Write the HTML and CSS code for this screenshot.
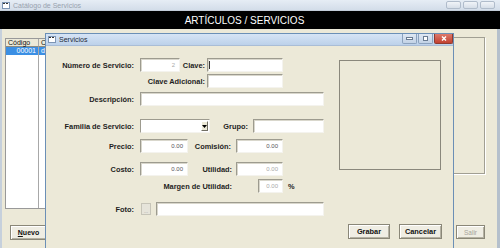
FILE: index.html
```html
<!DOCTYPE html>
<html lang="es">
<head>
<meta charset="utf-8">
<title>Catálogo de Servicios</title>
<link rel="stylesheet" href="styles.css">
</head>
<body>
<div class="win">
  <div class="win-title">
    <svg class="ico" width="8" height="7" viewBox="0 0 8 7"><rect x="0.5" y="0.5" width="7" height="6" fill="#fff" stroke="#7d95b4"/><rect x="1" y="1" width="2" height="1" fill="#333"/><rect x="4" y="1" width="2" height="1" fill="#333"/></svg>
    <span class="win-title-text">Catálogo de Servicios</span>
    <div class="win-btns"><span class="wb"></span><span class="wb"></span><span class="wb"></span></div>
  </div>
  <div class="banner">ARTÍCULOS / SERVICIOS</div>
  <div class="win-body">
    <div class="left-col">
      <div class="list">
        <div class="list-head"><span class="c1 hd">Código</span><span class="c2 hd">C</span></div>
        <div class="list-row sel"><span class="c1 num">00001</span><span class="c2">d</span></div>
        <div class="list-fill"><span class="c1"></span><span class="c2"></span></div>
      </div>
      <button class="btn nuevo"><u>N</u>uevo</button>
    </div>
    <div class="right-col">
      <div class="frame"></div>
      <button class="btn salir">Salir</button>
    </div>
  </div>

  <div class="dlg">
    <div class="dlg-title">
      <svg class="ico" width="8" height="7" viewBox="0 0 8 7"><rect x="0.5" y="0.5" width="7" height="6" fill="#fff" stroke="#7d95b4"/><rect x="1" y="1" width="2" height="1" fill="#333"/><rect x="4" y="1" width="2" height="1" fill="#333"/></svg>
      <span class="dlg-title-text">Servicios</span>
      <div class="dlg-btns">
        <span class="db"><svg width="7" height="3" viewBox="0 0 7 3"><rect x="0.5" y="0.5" width="6" height="2" fill="#fff" stroke="#6a7c92"/></svg></span>
        <span class="db"><svg width="5" height="5" viewBox="0 0 5 5"><rect x="0.5" y="0.5" width="4" height="4" fill="#fff" stroke="#6a7c92"/></svg></span>
        <span class="db close"><svg width="6" height="5" viewBox="0 0 6 5"><path d="M1 0.5 L5 4.5 M5 0.5 L1 4.5" stroke="#fff" stroke-width="1.4"/></svg></span>
      </div>
    </div>
    <div class="dlg-body">
      <div class="form">
        <div class="row r1">
          <span class="lbl w88">Número de Servicio:</span>
          <span class="inp dis ml6 w40">2</span>
          <span class="lbl w25">Clave:</span>
          <span class="inp ml2 w76"><span class="caret"></span></span>
        </div>
        <div class="row r2">
          <span class="lbl w159">Clave Adicional:</span>
          <span class="inp ml2 w76"></span>
        </div>
        <div class="row r3">
          <span class="lbl w88">Descripción:</span>
          <span class="inp ml6 w184"></span>
        </div>
        <div class="row r4">
          <span class="lbl w88">Familia de Servicio:</span>
          <span class="combo ml6"><span class="drop"><svg width="5" height="3" viewBox="0 0 5 3"><path d="M0 0 H5 L2.5 3 Z" fill="#000"/></svg></span></span>
          <span class="lbl w38">Grupo:</span>
          <span class="inp ml5 w71"></span>
        </div>
        <div class="row r5">
          <span class="lbl w88">Precio:</span>
          <span class="inp ml6 w48">0.00</span>
          <span class="lbl w43">Comisión:</span>
          <span class="inp ml5 w47">0.00</span>
        </div>
        <div class="row r6">
          <span class="lbl w88">Costo:</span>
          <span class="inp ml6 w48">0.00</span>
          <span class="lbl w44">Utilidad:</span>
          <span class="inp dis ml4 w47">0.00</span>
        </div>
        <div class="row r7">
          <span class="lbl w186">Margen de Utilidad:</span>
          <span class="inp dis ml26 w25">0.00</span>
          <span class="lbl pct">%</span>
        </div>
        <div class="row r8">
          <span class="lbl w88">Foto:</span>
          <span class="mini">...</span>
          <span class="inp ml5 w168"></span>
        </div>
      </div>
      <div class="side">
        <div class="photo"></div>
        <div class="actions">
          <button class="btn act grabar">Grabar</button>
          <button class="btn act cancelar">Cancelar</button>
        </div>
      </div>
    </div>
  </div>
</div>
</body>
</html>
```
FILE: styles.css
```css
* { box-sizing: border-box; margin: 0; padding: 0; }
html, body { width: 500px; height: 248px; overflow: hidden; }
body { font-family: "Liberation Sans", Arial, sans-serif; background: #ece9d8; color: #1a1a1a; }

.win { position: relative; width: 500px; height: 248px; display: flex; flex-direction: column; background: #ece9d8; overflow: hidden; }

.win-title { height: 11px; display: flex; align-items: center; padding-left: 2px; background: linear-gradient(#e6edf5, #d3dde9); border-bottom: 1px solid #c3ccd8; }
.ico { display: block; flex: none; }
.win-title-text { font-size: 7px; color: #98a2ae; margin-left: 3px; }
.win-btns { margin-left: auto; margin-right: 5px; display: flex; gap: 2px; align-self: flex-start; margin-top: 1px; }
.wb { width: 15px; height: 8px; border: 1px solid #b0bccb; border-radius: 2px; background: linear-gradient(#f1f4f8, #d6dee8); }

.banner { height: 18px; background: #000; color: #fff; font-size: 10px; display: flex; align-items: center; justify-content: center; padding-right: 11px; }

.win-body { flex: 1; display: flex; justify-content: space-between; border-left: 2px solid #c6d0dc; border-right: 3px solid #b5c0cc; padding: 0 12px 0 3px; }

.left-col { display: flex; flex-direction: column; }
.list { margin-top: 9px; width: 200px; height: 171px; background: #fff; border: 1px solid #999; display: flex; flex-direction: column; font-size: 7px; }
.list-head, .list-row, .list-fill { display: flex; }
.list-head { height: 8px; }
.hd { background: #ece9d8; border-right: 1px solid #8c8a7e; border-bottom: 1px solid #8c8a7e; line-height: 7px; padding-left: 2px; color: #111; }
.c1 { width: 33px; border-right: 1px solid #a8a8a8; }
.c2 { flex: 1; padding-left: 2px; }
.list-row { height: 8px; line-height: 8px; }
.sel { background: #3b8fe4; color: #fff; }
.num { text-align: right; padding-right: 2px; }
.list-fill { flex: 1; }

.btn { font-family: "Liberation Sans", Arial, sans-serif; background: #efede3; border: 1px solid #8a8778; box-shadow: inset 1px 1px 0 #fff, inset -1px -1px 0 #b4b1a2; color: #111; display: flex; align-items: center; justify-content: center; }
.nuevo { margin-top: 16px; margin-left: 5px; width: 37px; height: 15px; font-size: 7px; font-weight: bold; }

.right-col { display: flex; flex-direction: column; align-items: flex-end; }
.frame { margin-top: 8px; width: 65px; height: 137px; border: 1px solid #a19f93; box-shadow: 1px 1px 0 #fff; }
.salir { margin-top: 51px; width: 29px; height: 14px; font-size: 6.5px; color: #a6a49a; }

.dlg { position: absolute; left: 45px; top: 33px; width: 409px; height: 215px; background: #ece9d8; border: 1px solid #6b8fb6; border-bottom: none; display: flex; flex-direction: column; }
.dlg-title { height: 12px; flex: none; display: flex; align-items: center; padding-left: 2px; background: linear-gradient(#d6e4f5, #bcd1ea); border-bottom: 1px solid #a9bdd6; }
.dlg-title-text { font-size: 7px; color: #1d2838; margin-left: 3px; }
.dlg-btns { margin-left: auto; display: flex; gap: 1px; align-self: flex-start; }
.db { width: 15px; height: 10px; border: 1px solid #8ca2bd; border-top: none; border-radius: 0 0 2px 2px; background: linear-gradient(#dfe8f3, #c2d2e6); display: flex; align-items: center; justify-content: center; }
.db.close { width: 19px; background: linear-gradient(#de7a6c, #c2402f); border-color: #8e3a30; }

.dlg-body { flex: 1; display: flex; min-height: 0; }
.form { width: 280px; flex: none; padding-top: 1px; }
.row { display: flex; align-items: center; height: 14px; }
.r1 { margin-top: 11px; }
.r2 { margin-top: 2px; }
.r3 { margin-top: 4px; }
.r4 { margin-top: 13px; }
.r5 { margin-top: 6px; }
.r6 { margin-top: 9px; }
.r7 { margin-top: 3px; }
.r8 { margin-top: 9px; }

.lbl { font-size: 7.4px; font-weight: bold; color: #1e1e1e; text-align: right; white-space: nowrap; flex: none; }
.w88 { width: 88px; }
.w25 { width: 25px; }
.w159 { width: 159px; }
.w38 { width: 38px; }
.w43 { width: 43px; }
.w44 { width: 44px; }
.w186 { width: 186px; }
.pct { margin-left: 5px; }

.inp { height: 14px; flex: none; background: #fff; border: 1px solid; border-color: #9d9b8f #f4f3ee #f4f3ee #9d9b8f; box-shadow: inset 1px 1px 0 #d9d7cc; font-size: 6px; color: #555; display: flex; align-items: center; justify-content: flex-end; padding-right: 4px; }
.inp.dis { color: #a9a9a9; }
.ml2 { margin-left: 2px; }
.ml4 { margin-left: 4px; }
.ml5 { margin-left: 5px; }
.ml6 { margin-left: 6px; }
.ml26 { margin-left: 26px; }
.w40 { width: 40px; }
.w76 { width: 76px; }
.w184 { width: 184px; }
.w71 { width: 71px; }
.w48 { width: 48px; }
.w47 { width: 47px; }
.w168 { width: 168px; }
.caret { width: 1px; height: 8px; background: #333; margin-right: auto; margin-left: 1px; }

.combo { width: 70px; height: 14px; flex: none; background: #fff; border: 1px solid; border-color: #9d9b8f #f4f3ee #f4f3ee #9d9b8f; display: flex; align-items: center; justify-content: flex-end; padding-right: 1px; }
.drop { width: 7px; height: 10px; background: #ece9d8; border: 1px solid; border-color: #fff #716f64 #716f64 #fff; display: flex; align-items: center; justify-content: center; }

.mini { width: 10px; height: 12px; flex: none; margin-left: 7px; background: #e6e4da; border: 1px solid #c6c4b8; font-size: 5px; line-height: 6px; color: #999; display: flex; align-items: flex-end; justify-content: center; }

.side { flex: 1; display: flex; flex-direction: column; }
.photo { margin-left: 13px; margin-top: 14px; width: 102px; height: 110px; border: 1px solid #8a887c; }
.actions { display: flex; margin-top: 54px; margin-left: 22px; gap: 9px; }
.act { height: 15px; font-size: 7.4px; font-weight: bold; }
.grabar { width: 42px; }
.cancelar { width: 43px; }
```
